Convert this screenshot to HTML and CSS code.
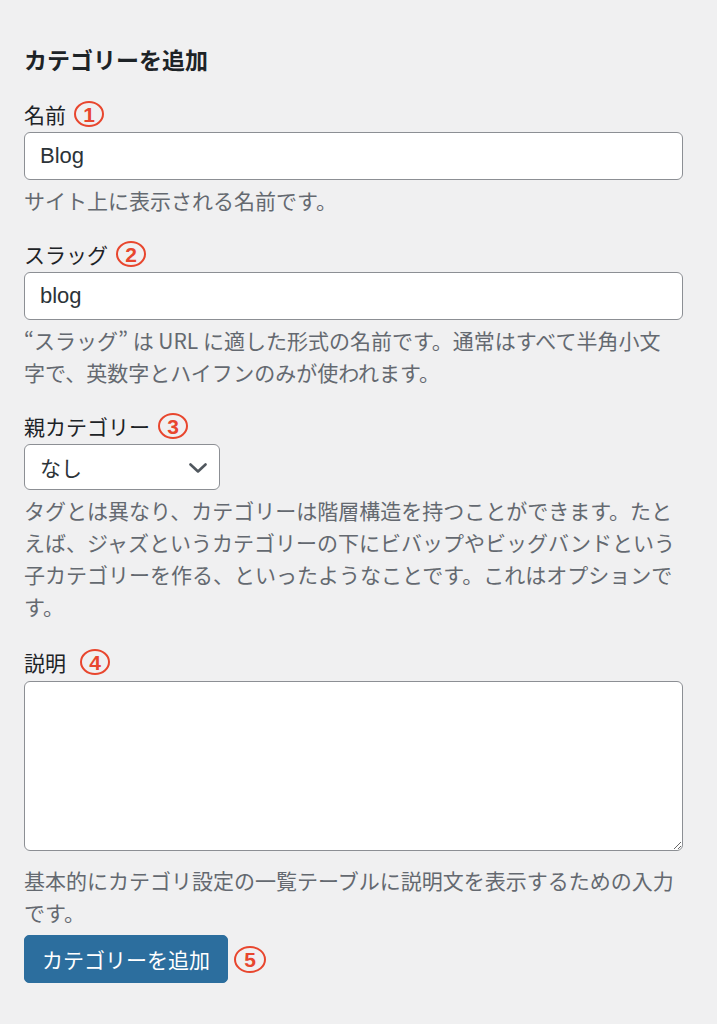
FILE: index.html
```html
<!DOCTYPE html>
<html lang="ja">
<head>
<meta charset="utf-8">
<title>カテゴリーを追加</title>
<link rel="stylesheet" href="styles.css">
</head>
<body>
<form class="form-wrap">
  <h2 class="title">カテゴリーを追加</h2>

  <div class="field first">
    <label class="label" for="tag-name">名前<span class="num">1</span></label>
    <input class="text-input" id="tag-name" type="text" value="Blog">
    <p class="desc">サイト上に表示される名前です。</p>
  </div>

  <div class="field">
    <label class="label" for="tag-slug">スラッグ<span class="num">2</span></label>
    <input class="text-input" id="tag-slug" type="text" value="blog">
    <p class="desc desc-slug">“スラッグ” は URL に適した形式の名前です。通常はすべて半角小文字で、英数字とハイフンのみが使われます。</p>
  </div>

  <div class="field">
    <label class="label" for="parent">親カテゴリー<span class="num">3</span></label>
    <div class="select-wrap">
      <select class="select" id="parent">
        <option>なし</option>
      </select>
      <svg class="chevron" width="18" height="10" viewBox="0 0 18 10" aria-hidden="true">
        <path d="M1.5 1.5 L9 8.5 L16.5 1.5" fill="none" stroke="#50575e" stroke-width="2.6" stroke-linecap="round" stroke-linejoin="round"/>
      </svg>
    </div>
    <p class="desc">タグとは異なり、カテゴリーは階層構造を持つことができます。たとえば、ジャズというカテゴリーの下にビバップやビッグバンドという子カテゴリーを作る、といったようなことです。これはオプションです。</p>
  </div>

  <div class="field field-desc">
    <label class="label" for="tag-description">説明<span class="num wide-gap">4</span></label>
    <textarea class="textarea" id="tag-description"></textarea>
    <p class="desc desc-after-area">基本的にカテゴリ設定の一覧テーブルに説明文を表示するための入力です。</p>
  </div>

  <div class="submit-row">
    <button class="button-primary" type="button">カテゴリーを追加</button>
    <span class="num num-btn">5</span>
  </div>
</form>
</body>
</html>
```

FILE: styles.css
```css
html, body {
  margin: 0;
  padding: 0;
  background: #f0f0f1;
}

body {
  font-family: "Noto Sans CJK JP", "Noto Sans", sans-serif;
  color: #1d2327;
}

.form-wrap {
  width: 659px;
  padding: 0 0 0 24px;
  margin: 0;
}

.title {
  margin: 44px 0 0;
  font-size: 23px;
  line-height: 30px;
  font-weight: 700;
  color: #1d2327;
}

.field {
  margin-top: 23px;
}

.field.first {
  margin-top: 25px;
}

.field.field-desc {
  margin-top: 25px;
}

.label {
  display: flex;
  align-items: center;
  height: 30px;
  font-size: 21px;
  line-height: 30px;
  color: #1d2327;
}

.num {
  display: inline-flex;
  align-items: center;
  justify-content: center;
  box-sizing: border-box;
  width: 30px;
  height: 26px;
  margin-left: 8px;
  padding-top: 1px;
  border: 2px solid #e8462e;
  border-radius: 50%;
  color: #e8462e;
  font-family: "Liberation Sans", "Noto Sans", sans-serif;
  font-weight: 700;
  font-size: 21px;
  line-height: 1;
}

.num.wide-gap {
  margin-left: 14px;
}

.text-input {
  display: block;
  box-sizing: border-box;
  width: 659px;
  height: 48px;
  margin: 3px 0 0;
  padding: 0 15px;
  border: 1px solid #8c8f94;
  border-radius: 6px;
  background: #fff;
  font-family: "Liberation Sans", "Noto Sans CJK JP", sans-serif;
  font-size: 22px;
  color: #2c3338;
  outline: none;
}

.desc {
  margin: 4px 0 0;
  font-size: 21px;
  line-height: 32px;
  color: #646970;
}

.desc-slug {
  max-width: 648px;
}

.select-wrap {
  position: relative;
  width: 196px;
  margin-top: 3px;
}

.select {
  display: block;
  box-sizing: border-box;
  width: 196px;
  height: 46px;
  padding: 0 40px 0 15px;
  border: 1px solid #8c8f94;
  border-radius: 6px;
  background: #fff;
  font-family: "Noto Sans CJK JP", sans-serif;
  font-size: 21px;
  color: #2c3338;
  -webkit-appearance: none;
  appearance: none;
  outline: none;
}

.chevron {
  position: absolute;
  right: 13px;
  top: 19px;
  pointer-events: none;
}

.textarea {
  display: block;
  box-sizing: border-box;
  width: 659px;
  height: 170px;
  margin: 4px 0 0;
  padding: 8px 15px;
  border: 1px solid #8c8f94;
  border-radius: 6px;
  background: #fff;
  font-family: "Noto Sans CJK JP", sans-serif;
  font-size: 21px;
  resize: vertical;
  outline: none;
}

.desc-after-area {
  margin-top: 13px;
}

.submit-row {
  display: flex;
  align-items: center;
  margin-top: 7px;
}

.button-primary {
  box-sizing: border-box;
  height: 48px;
  padding: 0 17px;
  border: 1px solid #2c6e9e;
  border-radius: 5px;
  background: #2c6e9e;
  color: #fff;
  font-family: "Noto Sans CJK JP", sans-serif;
  font-size: 21px;
  line-height: 1;
  cursor: pointer;
}

.num.num-btn {
  width: 32px;
  height: 27px;
  margin-left: 6px;
}
```
